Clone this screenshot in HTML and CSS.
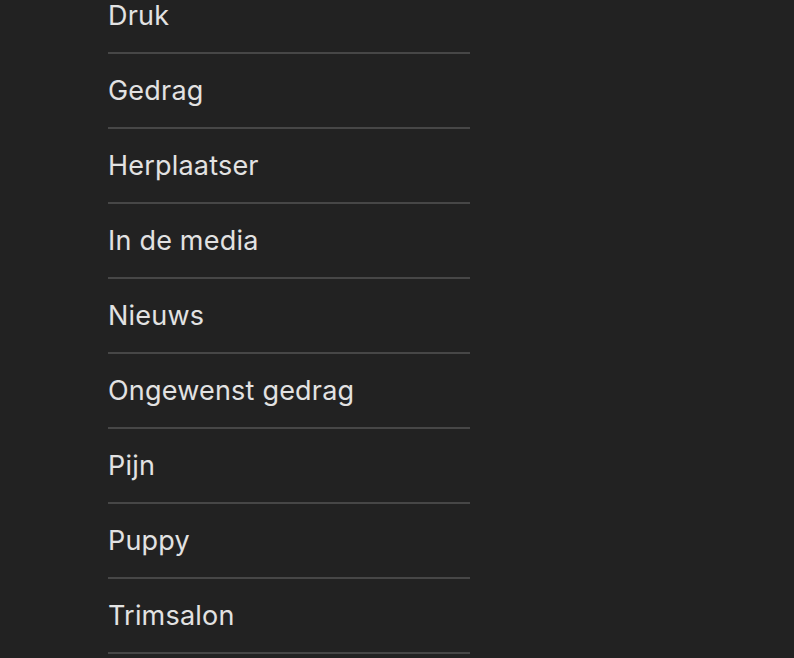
FILE: index.html
```html
<!DOCTYPE html>
<html lang="nl">
<head>
<meta charset="utf-8">
<link rel="stylesheet" href="styles.css">
</head>
<body>
<nav class="cats">
  <ul class="cat-list">
    <li class="cat-item"><a href="#">Druk</a></li>
    <li class="cat-item"><a href="#">Gedrag</a></li>
    <li class="cat-item"><a href="#">Herplaatser</a></li>
    <li class="cat-item"><a href="#">In de media</a></li>
    <li class="cat-item"><a href="#">Nieuws</a></li>
    <li class="cat-item"><a href="#">Ongewenst gedrag</a></li>
    <li class="cat-item"><a href="#">Pijn</a></li>
    <li class="cat-item"><a href="#">Puppy</a></li>
    <li class="cat-item"><a href="#">Trimsalon</a></li>
  </ul>
</nav>
</body>
</html>
```
FILE: styles.css
```css
html, body {
  margin: 0;
  padding: 0;
  background: #222222;
  height: 100%;
  overflow: hidden;
}
body {
  font-family: Inter, "Noto Sans", sans-serif;
  color: #e2e2e2;
}
.cats {
  padding-left: 108px;
  width: 362px;
}
.cat-list {
  list-style: none;
  margin: -21px 0 0;
  padding: 0;
}
.cat-item {
  padding: 21px 0 20px;
  border-bottom: 2px solid #474747;
  font-size: 27px;
  letter-spacing: 0.2px;
  line-height: 32px;
}
.cat-item a {
  color: inherit;
  text-decoration: none;
}
```
